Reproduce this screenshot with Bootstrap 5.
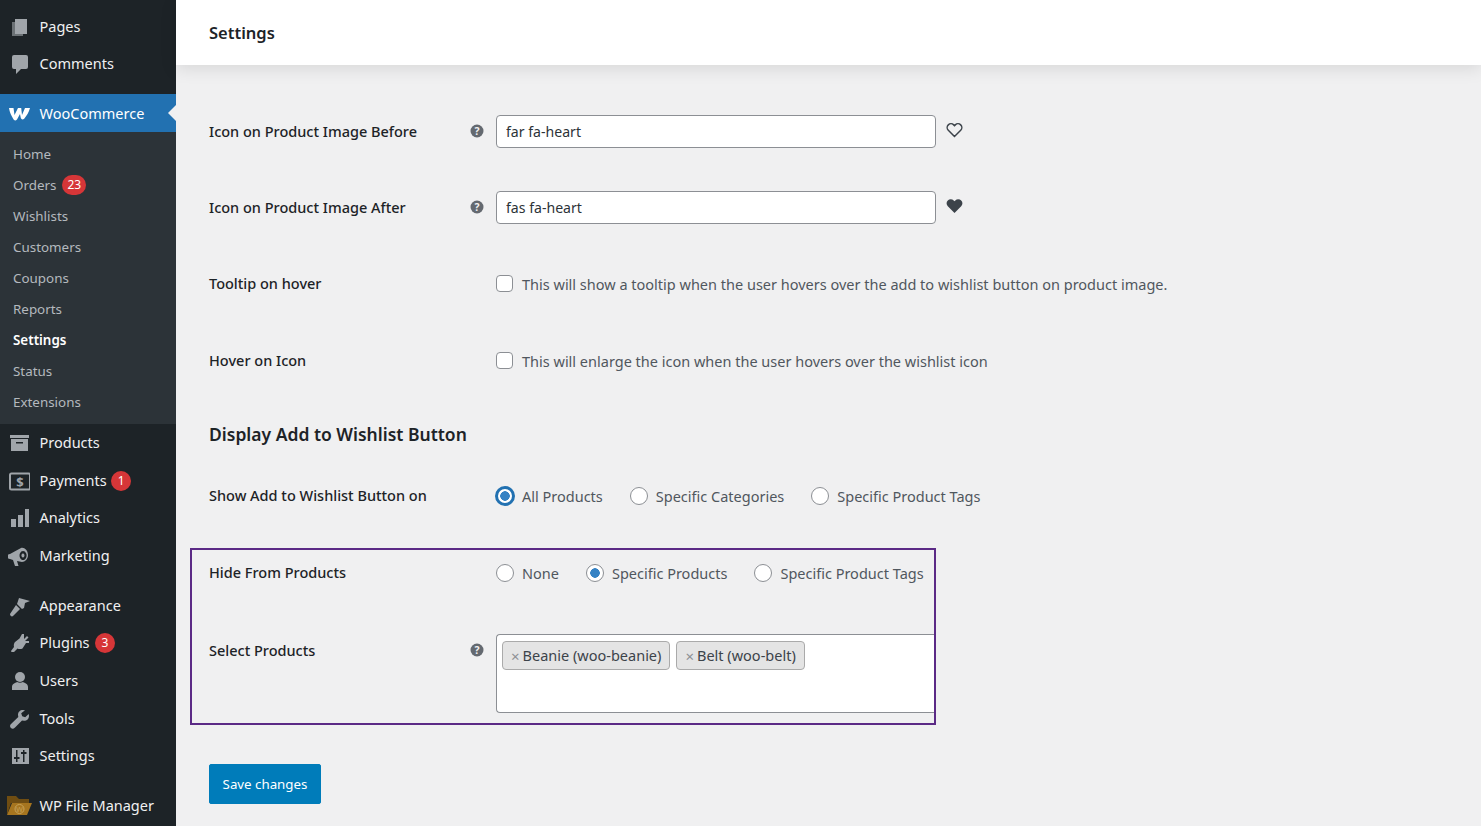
<!DOCTYPE html>
<html lang="en">
<head>
<meta charset="UTF-8">
<title>Settings</title>
<link href="https://cdn.jsdelivr.net/npm/bootstrap@5.3.3/dist/css/bootstrap.min.css" rel="stylesheet">
<style>
  html, body { height: 826px; overflow: hidden; }
  body { font-family: "Noto Sans", "Open Sans", sans-serif; background: #f0f0f1; color: #3c434a; font-size: 14px; }
  .wp-side { width: 176px; height: 826px; background: #1d2327; padding-top: 8px; flex: none; overflow: hidden; }
  .wp-link { height: 37.7px; color: #f0f0f1; font-size: 14.5px; padding: 0 0 0 8px; gap: 9.5px; text-decoration: none; white-space: nowrap; flex: none; }
  .wp-link svg { width: 22px; height: 22px; flex: none; fill: #a0a5aa; }
  .wp-link:hover { color: #f0f0f1; }
  .wp-short { height: 37px; }
  .wp-gap { height: 12px; flex: none; }
  .wp-active { background: #2271b1; color: #fff; position: relative; height: 38px; padding-top: 1px; }
  .wp-active::after { content: ""; position: absolute; right: 0; top: 11px; border: 8px solid transparent; border-right-color: #f0f0f1; border-left: 0; }
  .wp-sub { background: #2c3338; padding: 6.5px 0; flex: none; }
  .wp-sublink { height: 31px; padding-left: 13px; color: #b4b9be; font-size: 13.4px; text-decoration: none; gap: 6px; }
  .wp-sublink.now { color: #fff; font-weight: 600; }
  .wp-count { background: #d63638; color: #fff; border-radius: 10px; min-width: 20px; height: 20px; padding: 0 5px; font-size: 12px; line-height: 20px; text-align: center; }
  .wp-main { flex: 1; min-width: 0; position: relative; }
  .wp-head { height: 65px; background: #fff; padding: 1px 0 0 33px; box-shadow: 0 4px 16px rgba(0,0,0,.1); font-size: 16.5px; font-weight: 600; color: #1d2327; }
  .wp-body { padding: 50px 0 0 33px; }
  .set-row { height: 76px; }
  .set-row.tall { height: 77px; }
  .set-name { width: 260.5px; flex: none; font-weight: 500; color: #1d2327; font-size: 14.5px; padding-top: 6px; }
  .set-name.wide { width: 287px; padding-top: 6px; }
  .set-name.flat { padding-top: 0; }
  .set-help { width: 26.5px; flex: none; padding-top: 9px; }
  .set-help svg { width: 14px; height: 14px; display: block; }
  .set-input { width: 440px; height: 33px; border: 1px solid #8c8f94; border-radius: 4px; background: #fff; padding: 0 9px; font-size: 14.1px; color: #2c3338; }
  .set-heart { width: 17px; height: 16px; margin: 7px 0 0 10px; display: block; }
  .set-check { width: 17px; height: 17px; border: 1px solid #8c8f94; border-radius: 4px; background: #fff; margin: -2px 9px 0 0; flex: none; appearance: none; }
  .set-radio { width: 18px; height: 18px; border: 1px solid #8c8f94; border-radius: 50%; background: #fff; margin: -2px 8px 0 0; flex: none; appearance: none; }
  .set-radio:checked { background: radial-gradient(circle, #3582c4 0 4.5px, #fff 5px); }
  .set-radio.ring { width: 20px; height: 20px; margin: -2px 7px 0 -1px; border: 3px solid #2271b1; background: radial-gradient(circle, #3582c4 0 4.5px, #fff 5px); }
  .set-text { color: #50575e; font-size: 14.5px; white-space: nowrap; }
  .set-text label, label.set-text { padding-top: 1px; }
  .radio-group { gap: 27px; }
  .set-pad { padding-top: 6px; }
  .set-title { font-size: 17.5px; font-weight: 600; color: #1d2327; margin: 0; height: 65px; padding-top: 4px; }
  .hide-box { width: 746px; height: 177px; margin-left: -19px; border: 2px solid #5b2a86; padding: 0 0 0 17px; overflow: hidden; }
  .hide-top { height: 84px; padding-top: 12px; }
  .tag-box { width: 440px; height: 79px; background: #fff; border: 1px solid #8c8f94; border-right: 0; border-radius: 4px 0 0 4px; padding: 6px 5px; gap: 6px; }
  .tag-item { height: 29px; background: #e4e4e4; border: 1px solid #aaa; border-radius: 4px; padding: 1px 8px 0; color: #3c434a; font-size: 14.5px; gap: 3px; white-space: nowrap; }
  .tag-x { color: #8c8f94; font-size: 15px; }
  .save-btn { width: 112px; height: 40px; background: #007cba; color: #fff; border: 1px solid #007cba; border-radius: 2px; font-size: 13.3px; padding: 2px 0 0; margin-top: 39px; }
</style>
</head>
<body>
<div class="d-flex">
  <div class="wp-side">
    <nav class="nav flex-column flex-nowrap">
      <a class="wp-link wp-short d-flex align-items-center" href="#"><svg viewBox="0 0 22 22"><path d="M4 6h3v12h8v2H4z" opacity=".6"/><path d="M7 3h12v15H7z"/></svg>Pages</a>
      <a class="wp-link wp-short d-flex align-items-center" href="#"><svg viewBox="0 0 22 22"><path d="M6 2h12a2 2 0 0 1 2 2v10a2 2 0 0 1-2 2h-5l-5 5v-5H6a2 2 0 0 1-2-2V4a2 2 0 0 1 2-2z"/></svg>Comments</a>
      <div class="wp-gap"></div>
      <a class="wp-link wp-active d-flex align-items-center" href="#"><svg viewBox="0 0 22 22"><path style="fill:#fff" d="M1 5h4.500l1 7 3.500-7h3.200l.8 7 3-7H22c-1 4-3.500 8-6 11-2 1-3 0-3.300-1.500L12 11l-3 5.500c-1.500 1.500-3 1-3.700-.5C3.500 13 1.500 9 1 5z"/></svg>WooCommerce</a>
      <div class="wp-sub d-flex flex-column">
        <a class="wp-sublink d-flex align-items-center" href="#">Home</a>
        <a class="wp-sublink d-flex align-items-center" href="#">Orders <span class="wp-count">23</span></a>
        <a class="wp-sublink d-flex align-items-center" href="#">Wishlists</a>
        <a class="wp-sublink d-flex align-items-center" href="#">Customers</a>
        <a class="wp-sublink d-flex align-items-center" href="#">Coupons</a>
        <a class="wp-sublink d-flex align-items-center" href="#">Reports</a>
        <a class="wp-sublink now d-flex align-items-center" href="#">Settings</a>
        <a class="wp-sublink d-flex align-items-center" href="#">Status</a>
        <a class="wp-sublink d-flex align-items-center" href="#">Extensions</a>
      </div>
      <a class="wp-link d-flex align-items-center" href="#"><svg viewBox="0 0 22 22"><path d="M2 3h19v3H2zM3 7h17v12H3zm5 3v1.500h7V10z" fill-rule="evenodd"/></svg>Products</a>
      <a class="wp-link d-flex align-items-center" href="#"><svg viewBox="0 0 22 22"><rect x="2" y="3.500" width="20" height="16" rx="1.500" fill="none" stroke="#a0a5aa" stroke-width="2"/><text x="12" y="17" text-anchor="middle" font-size="13" font-weight="700" fill="#a0a5aa">$</text></svg>Payments <span class="wp-count" style="margin-left:-5px">1</span></a>
      <a class="wp-link d-flex align-items-center" href="#"><svg viewBox="0 0 22 22"><path d="M3 12h5v8H3zM10 8h5v12h-5zM17 2h4v18h-4z"/></svg>Analytics</a>
      <a class="wp-link d-flex align-items-center" href="#"><svg viewBox="0 0 22 22"><path fill-rule="evenodd" d="M2 9l11-6c3-1 7 2 7 7 0 4-3 7-6 7L9 16l1.500 5H7l-2-6-3-1a2 2 0 0 1 0-5zm13-3a3.500 4.500 0 1 0 .1 0zm0 2.500a1.500 2 0 1 1-.1 0z"/></svg>Marketing</a>
      <div class="wp-gap"></div>
      <a class="wp-link d-flex align-items-center" href="#"><svg viewBox="0 0 22 22"><path d="M11 3l11 3-5 2-1 5-2 1-5-5zM8 10l4 4-7 7c-1 1-3 0-3-2z"/></svg>Appearance</a>
      <a class="wp-link d-flex align-items-center" href="#"><svg viewBox="0 0 22 22"><path d="M14 2h2v5l3-3 1.500 1.500-3.500 3.500h4v2h-3l-3.500 5.500c-2 1-4 .5-5 0L6 20H3.500l-.5-1 3-4c-.5-2 0-4 1-5l4.500-3.500z"/></svg>Plugins <span class="wp-count" style="margin-left:-4px">3</span></a>
      <a class="wp-link d-flex align-items-center" href="#"><svg viewBox="0 0 22 22"><circle cx="12" cy="7" r="5"/><path d="M4 20v-3c0-3 3-4 5-5 2 1 4 1 6 0 2 1 5 2 5 5v3z"/></svg>Users</a>
      <a class="wp-link d-flex align-items-center" href="#"><svg viewBox="0 0 22 22"><path d="M15 2c-3 0-5 2-5 5l.3 2L3 16c-1.500 1.500-1 3 0 4s2.500 1 4-.5l7-7 2 .3c3 0 5-2 5-5l-.3-1.800-3.500 3.300-3-1 -1-3L17 2.200z"/></svg>Tools</a>
      <a class="wp-link d-flex align-items-center" href="#"><svg viewBox="0 0 22 22"><path fill-rule="evenodd" d="M4 3h17v16H4zm4 2v7H6v2h2v3h1.500v-3h2v-2h-2V5zm7 0v2h-2v2h2v8h1.500V9h2V7h-2V5z"/></svg>Settings</a>
      <div class="wp-gap"></div>
      <a class="wp-link d-flex align-items-center" href="#" style="padding-left:7px;gap:7.5px"><svg viewBox="0 0 25 22" style="width:25px"><path style="fill:#6f4d12" d="M0 1h9l3 3h10v4H4L0 20z"/><path style="fill:#a6751f" d="M5 8h20l-5 12H0z"/><circle cx="12.500" cy="14" r="4.500" fill="none" stroke="#c8a35a"/><text x="12.500" y="16.500" text-anchor="middle" font-size="7" fill="#c8a35a">W</text></svg>WP File Manager</a>
    </nav>
  </div>

  <div class="wp-main">
    <div class="wp-head d-flex align-items-center">Settings</div>
    <div class="wp-body">
      <div class="set-row d-flex">
        <div class="set-name">Icon on Product Image Before</div>
        <div class="set-help"><svg viewBox="0 0 14 14"><circle cx="7" cy="7" r="6.500" fill="#646970"/><text x="7" y="11" text-anchor="middle" font-size="10.500" font-weight="700" fill="#f0f0f1">?</text></svg></div>
        <input class="set-input" type="text" value="far fa-heart">
        <svg class="set-heart" viewBox="0 0 17 16"><path d="M8.500 14.500 2.300 8.300a3.800 3.800 0 0 1 5.400-5.400l.8.800.8-.8a3.800 3.800 0 0 1 5.400 5.400z" fill="none" stroke="#3c434a" stroke-width="1.500"/></svg>
      </div>
      <div class="set-row d-flex">
        <div class="set-name">Icon on Product Image After</div>
        <div class="set-help"><svg viewBox="0 0 14 14"><circle cx="7" cy="7" r="6.500" fill="#646970"/><text x="7" y="11" text-anchor="middle" font-size="10.500" font-weight="700" fill="#f0f0f1">?</text></svg></div>
        <input class="set-input" type="text" value="fas fa-heart">
        <svg class="set-heart" viewBox="0 0 17 16"><path d="M8.500 15 1.800 8.300a4 4 0 0 1 5.900-5.900l.8.800.8-.8a4 4 0 0 1 5.900 5.900z" fill="#3c434a"/></svg>
      </div>
      <div class="set-row tall d-flex set-pad">
        <div class="set-name wide flat">Tooltip on hover</div>
        <label class="set-text d-flex align-items-center align-self-start"><input class="set-check" type="checkbox">This will show a tooltip when the user hovers over the add to wishlist button on product image.</label>
      </div>
      <div class="set-row d-flex set-pad">
        <div class="set-name wide flat">Hover on Icon</div>
        <label class="set-text d-flex align-items-center align-self-start"><input class="set-check" type="checkbox">This will enlarge the icon when the user hovers over the wishlist icon</label>
      </div>
      <h2 class="set-title">Display Add to Wishlist Button</h2>
      <div class="set-row d-flex" style="height:63px">
        <div class="set-name wide flat">Show Add to Wishlist Button on</div>
        <div class="set-text radio-group d-flex">
          <label class="d-flex align-items-center align-self-start"><input class="set-radio ring" type="radio" name="show" checked>All Products</label>
          <label class="d-flex align-items-center align-self-start"><input class="set-radio" type="radio" name="show">Specific Categories</label>
          <label class="d-flex align-items-center align-self-start"><input class="set-radio" type="radio" name="show">Specific Product Tags</label>
        </div>
      </div>
      <div class="hide-box">
        <div class="hide-top d-flex">
          <div class="set-name wide flat">Hide From Products</div>
          <div class="set-text radio-group d-flex">
            <label class="d-flex align-items-center align-self-start"><input class="set-radio" type="radio" name="hide">None</label>
            <label class="d-flex align-items-center align-self-start"><input class="set-radio" type="radio" name="hide" checked>Specific Products</label>
            <label class="d-flex align-items-center align-self-start"><input class="set-radio" type="radio" name="hide">Specific Product Tags</label>
          </div>
        </div>
        <div class="d-flex">
          <div class="set-name">Select Products</div>
          <div class="set-help"><svg viewBox="0 0 14 14"><circle cx="7" cy="7" r="6.500" fill="#646970"/><text x="7" y="11" text-anchor="middle" font-size="10.500" font-weight="700" fill="#f0f0f1">?</text></svg></div>
          <div class="tag-box d-flex align-items-start">
            <span class="tag-item d-flex align-items-center"><span class="tag-x">×</span>Beanie (woo-beanie)</span>
            <span class="tag-item d-flex align-items-center"><span class="tag-x">×</span>Belt (woo-belt)</span>
          </div>
        </div>
      </div>
      <button class="btn save-btn" type="button">Save changes</button>
    </div>
  </div>
</div>
</body>
</html>
